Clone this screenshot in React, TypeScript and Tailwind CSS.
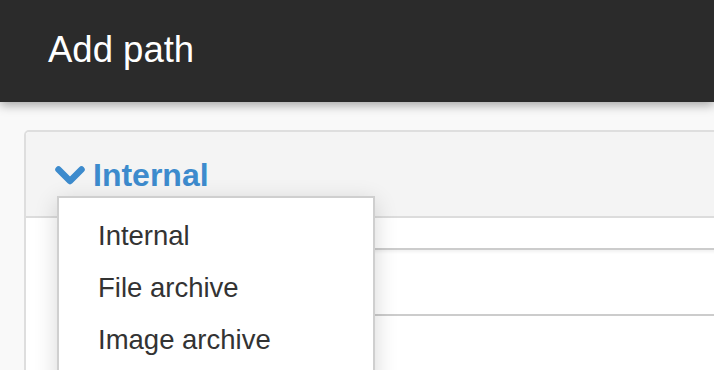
import React from "react";

export default function App() {
  return (
    <div className="relative w-[714px] h-[370px] overflow-hidden bg-[#f9f9f9]" style={{ fontFamily: '"Liberation Sans", Arial, sans-serif' }}>
      <header className="relative z-10 h-[102px] bg-[#2b2b2b] shadow-[0_3px_10px_rgba(0,0,0,0.35)] flex items-center pl-[48px]">
        <h1 className="text-white text-[36.5px] leading-none pb-[2px]">Add path</h1>
      </header>
      <div className="pt-[28px] pl-[24px]">
        <div className="relative w-[720px] h-[300px] rounded-[5px] border-2 border-[#dedede] bg-white">
          <div className="h-[86px] bg-[#f4f4f4] rounded-t-[4px] border-b-2 border-[#dcdcdc] flex items-center pl-[29px] gap-[8px]">
            <svg width="30" height="19" viewBox="0 0 30 19" className="mt-[2px]">
              <polyline points="3.5,3.5 15,15 26.5,3.5" fill="none" stroke="#3d8bcd" strokeWidth="6.5" strokeLinecap="round" strokeLinejoin="round" />
            </svg>
            <span className="text-[#3d8bcd] font-bold text-[32px] leading-none mt-[1px]">Internal</span>
          </div>
          <div className="pt-[30px] pl-[31px]">
            <div className="h-[68px] border-2 border-[#cccccc] rounded-[4px] shadow-[inset_0_2px_3px_rgba(0,0,0,0.06)] bg-white" />
          </div>
        </div>
      </div>
      <div className="absolute left-[57px] top-[196px] w-[318px] h-[200px] bg-white border-2 border-[#cfcfcf] shadow-[0_6px_22px_rgba(0,0,0,0.16)] z-20 pt-[12px]">
        <ul className="text-[#333333] text-[27.5px]">
          <li className="leading-[52px] pl-[39px]">Internal</li>
          <li className="leading-[52px] pl-[39px]">File archive</li>
          <li className="leading-[52px] pl-[39px]">Image archive</li>
        </ul>
      </div>
    </div>
  );
}
